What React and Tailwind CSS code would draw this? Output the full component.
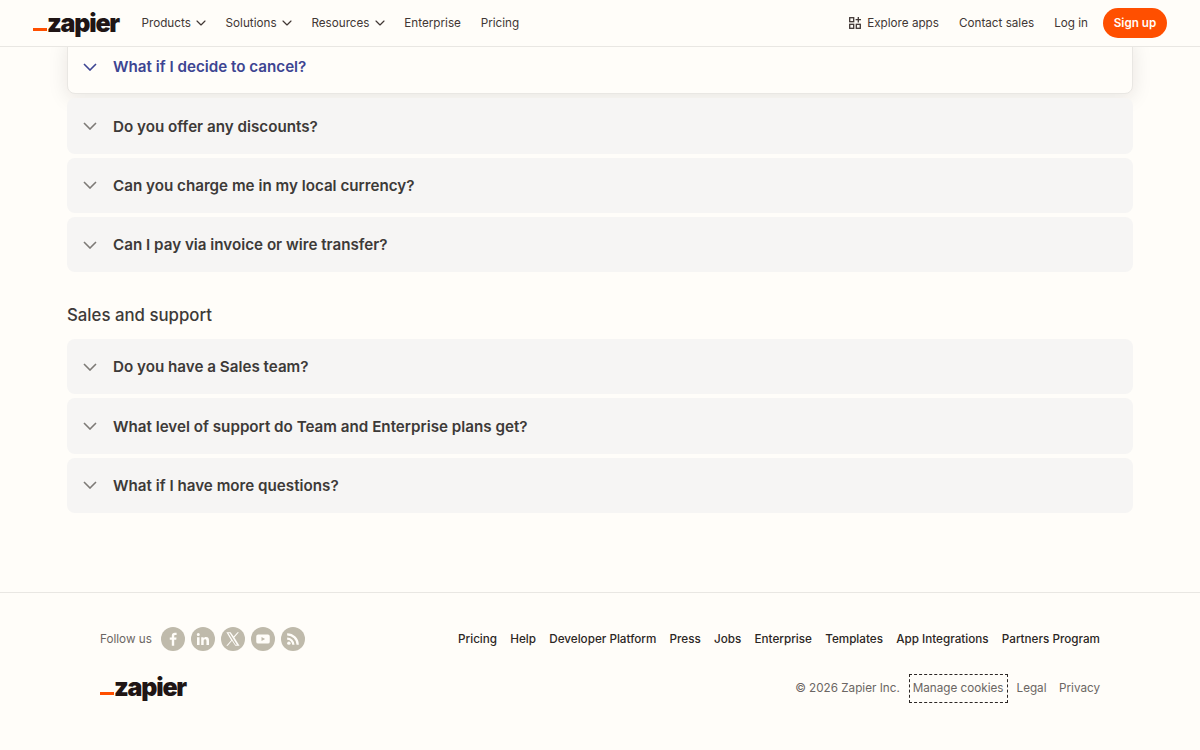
import { ChevronDown } from "lucide-react";

const nav = [
  { label: "Products", menu: true },
  { label: "Solutions", menu: true },
  { label: "Resources", menu: true },
  { label: "Enterprise" },
  { label: "Pricing" },
];

const billing = [
  "Do you offer any discounts?",
  "Can you charge me in my local currency?",
  "Can I pay via invoice or wire transfer?",
];

const sales = [
  "Do you have a Sales team?",
  "What level of support do Team and Enterprise plans get?",
  "What if I have more questions?",
];

const footerLinks = [
  "Pricing",
  "Help",
  "Developer Platform",
  "Press",
  "Jobs",
  "Enterprise",
  "Templates",
  "App Integrations",
  "Partners Program",
];

function Logo() {
  return (
    <div className="flex items-end">
      <span className="mb-[5px] h-[3px] w-[14px] bg-[#ff4f00]"></span>
      <span className="text-[25px] leading-[26px] font-black tracking-[-1.2px] text-[#201515]">zapier</span>
    </div>
  );
}

function Chevron({ className }) {
  return (
    <svg viewBox="0 0 14 8" className={`h-[8px] w-[14px] shrink-0 ${className}`} fill="none" stroke="currentColor" strokeWidth="1.6">
      <path d="M1 1l6 6 6-6" />
    </svg>
  );
}

function Question({ text }) {
  return (
    <div className="flex h-[55.3px] items-center gap-[16px] rounded-[8px] bg-[#f6f5f4] pl-[16px]">
      <Chevron className="text-[#7d7a76]" />
      <span className="pt-[2px] text-[15.2px] font-semibold text-[#3d3a38]">{text}</span>
    </div>
  );
}

function Social({ children }) {
  return (
    <a className="flex h-[24px] w-[24px] items-center justify-center rounded-full bg-[#bfbaab]">
      <svg viewBox="0 0 24 24" className="h-[18px] w-[18px]" fill="#fffdf9">
        {children}
      </svg>
    </a>
  );
}

export default function App() {
  return (
    <div className="flex h-[750px] flex-col overflow-hidden bg-[#fffdf9] font-['Inter',sans-serif]">
      <header className="relative z-10 flex h-[47px] shrink-0 items-center border-b border-[#e9e7e3] bg-[#fffdf9] px-[33px]">
        <Logo />
        <nav className="ml-[22.5px] flex items-center gap-[19.8px] text-[11.7px] text-[#413735]">
          {nav.map((n) => (
            <a key={n.label} className="flex items-center gap-[2px]">
              <span className="pt-[2px]">{n.label}</span>
              {n.menu && <ChevronDown className="-mr-[3px] h-[16px] w-[16px]" strokeWidth={1.75} />}
            </a>
          ))}
        </nav>
        <div className="ml-auto flex items-center gap-[20px] text-[11.7px] text-[#413735]">
          <a className="flex items-center gap-[6px]">
            <svg viewBox="0 0 12 12" className="h-[12px] w-[12px]" fill="none" stroke="#413735" strokeWidth="1.3">
              <rect x="0.7" y="0.7" width="4" height="4" />
              <rect x="0.7" y="7.3" width="4" height="4" />
              <rect x="7.3" y="7.3" width="4" height="4" />
              <path d="M9.3 0v5.400M6.600 2.700H12" />
            </svg>
            <span className="pt-[2px]">Explore apps</span>
          </a>
          <a className="pt-[2px]">Contact sales</a>
          <a className="pt-[2px]">Log in</a>
          <a className="-ml-[5px] flex h-[30px] w-[64px] items-center justify-center rounded-full bg-[#ff4f00] pt-[2px] font-semibold text-[#fffdf9]">
            Sign up
          </a>
        </div>
      </header>

      <main className="-mt-[8px] flex flex-1 flex-col px-[67px]">
        <div className="flex flex-col gap-[4px]">
          <div className="flex h-[55.3px] items-center gap-[16px] rounded-[8px] border border-[#e9e7e3] bg-[#fffdf9] pl-[15px] shadow-[0_4px_20px_rgba(32,21,21,0.1)]">
            <Chevron className="text-[#3d4592]" />
            <span className="pt-[2px] text-[15.2px] font-semibold text-[#3d4592]">What if I decide to cancel?</span>
          </div>
          {billing.map((q) => (
            <Question key={q} text={q} />
          ))}
        </div>

        <h2 className="mt-[31px] mb-[12px] text-[16.8px] leading-[24px] font-medium text-[#3d3a38]">Sales and support</h2>

        <div className="flex flex-col gap-[4px]">
          {sales.map((q) => (
            <Question key={q} text={q} />
          ))}
        </div>
      </main>

      <footer className="flex h-[158px] shrink-0 flex-col border-t border-[#e9e7e3] px-[100px] pt-[33px]">
        <div className="flex items-center justify-between">
          <div className="flex items-center">
            <span className="mr-[9px] pt-[2px] text-[11.7px] text-[#6b6663]">Follow us</span>
            <div className="flex gap-[6px]">
              <Social>
                <path d="M13.600 21v-8h2.700l.4-3.100h-3.100V8c0-.9.3-1.500 1.600-1.500h1.600V3.700c-.3 0-1.300-.1-2.400-.1-2.400 0-4 1.400-4 4.100v2.200H7.700V13h2.700v8z" />
              </Social>
              <Social>
                <path d="M4 9.500h3.400V20H4zM5.700 4a2 2 0 1 1 0 4 2 2 0 0 1 0-4zM9.600 9.500h3.200v1.400c.5-.9 1.600-1.700 3.200-1.700 3.400 0 4 2.200 4 5.100V20h-3.400v-5c0-1.200 0-2.800-1.700-2.800s-2 1.300-2 2.700V20H9.600z" />
              </Social>
              <Social>
                <path d="M3.200 3h5.600l4.100 5.800L18 3h1.900l-6.100 7 6.900 10.900h-5.600l-4.500-6.500L5 20.900H3.100l6.500-7.400zm2.700 1.300 9.500 15.300h1.800L7.700 4.300z" />
              </Social>
              <Social>
                <path d="M5.500 6h13A2.500 2.500 0 0 1 21 8.500v7a2.500 2.500 0 0 1-2.500 2.500h-13A2.500 2.500 0 0 1 3 15.500v-7A2.500 2.500 0 0 1 5.500 6zM10 9.200v5.600l4.800-2.800z" fillRule="evenodd" />
              </Social>
              <Social>
                <circle cx="6.500" cy="17.500" r="2.300" />
                <path d="M4.200 10v3a6.800 6.800 0 0 1 6.800 6.800h3A9.800 9.800 0 0 0 4.200 10z" />
                <path d="M4.200 4.200v3a12.600 12.600 0 0 1 12.600 12.600h3A15.600 15.600 0 0 0 4.200 4.200z" />
              </Social>
            </div>
          </div>
          <nav className="flex gap-[13.2px] pt-[1px] text-[11.7px] leading-[24px] font-medium text-[#2b2624]">
            {footerLinks.map((l) => (
              <a key={l}>{l}</a>
            ))}
          </nav>
        </div>
        <div className="mt-[23px] flex items-center justify-between">
          <div className="-mt-[4px]">
            <Logo />
          </div>
          <div className="flex items-center text-[11.7px] text-[#6b6663]">
            <span className="mr-[9px] pt-[1px]">© 2026 Zapier Inc.</span>
            <a className="mr-[9px] flex h-[29px] items-center border border-dashed border-[#2b2624] px-[3px] pt-[1px]">Manage cookies</a>
            <a className="mr-[12.500px] pt-[1px]">Legal</a>
            <a className="pt-[1px]">Privacy</a>
          </div>
        </div>
      </footer>
    </div>
  );
}
